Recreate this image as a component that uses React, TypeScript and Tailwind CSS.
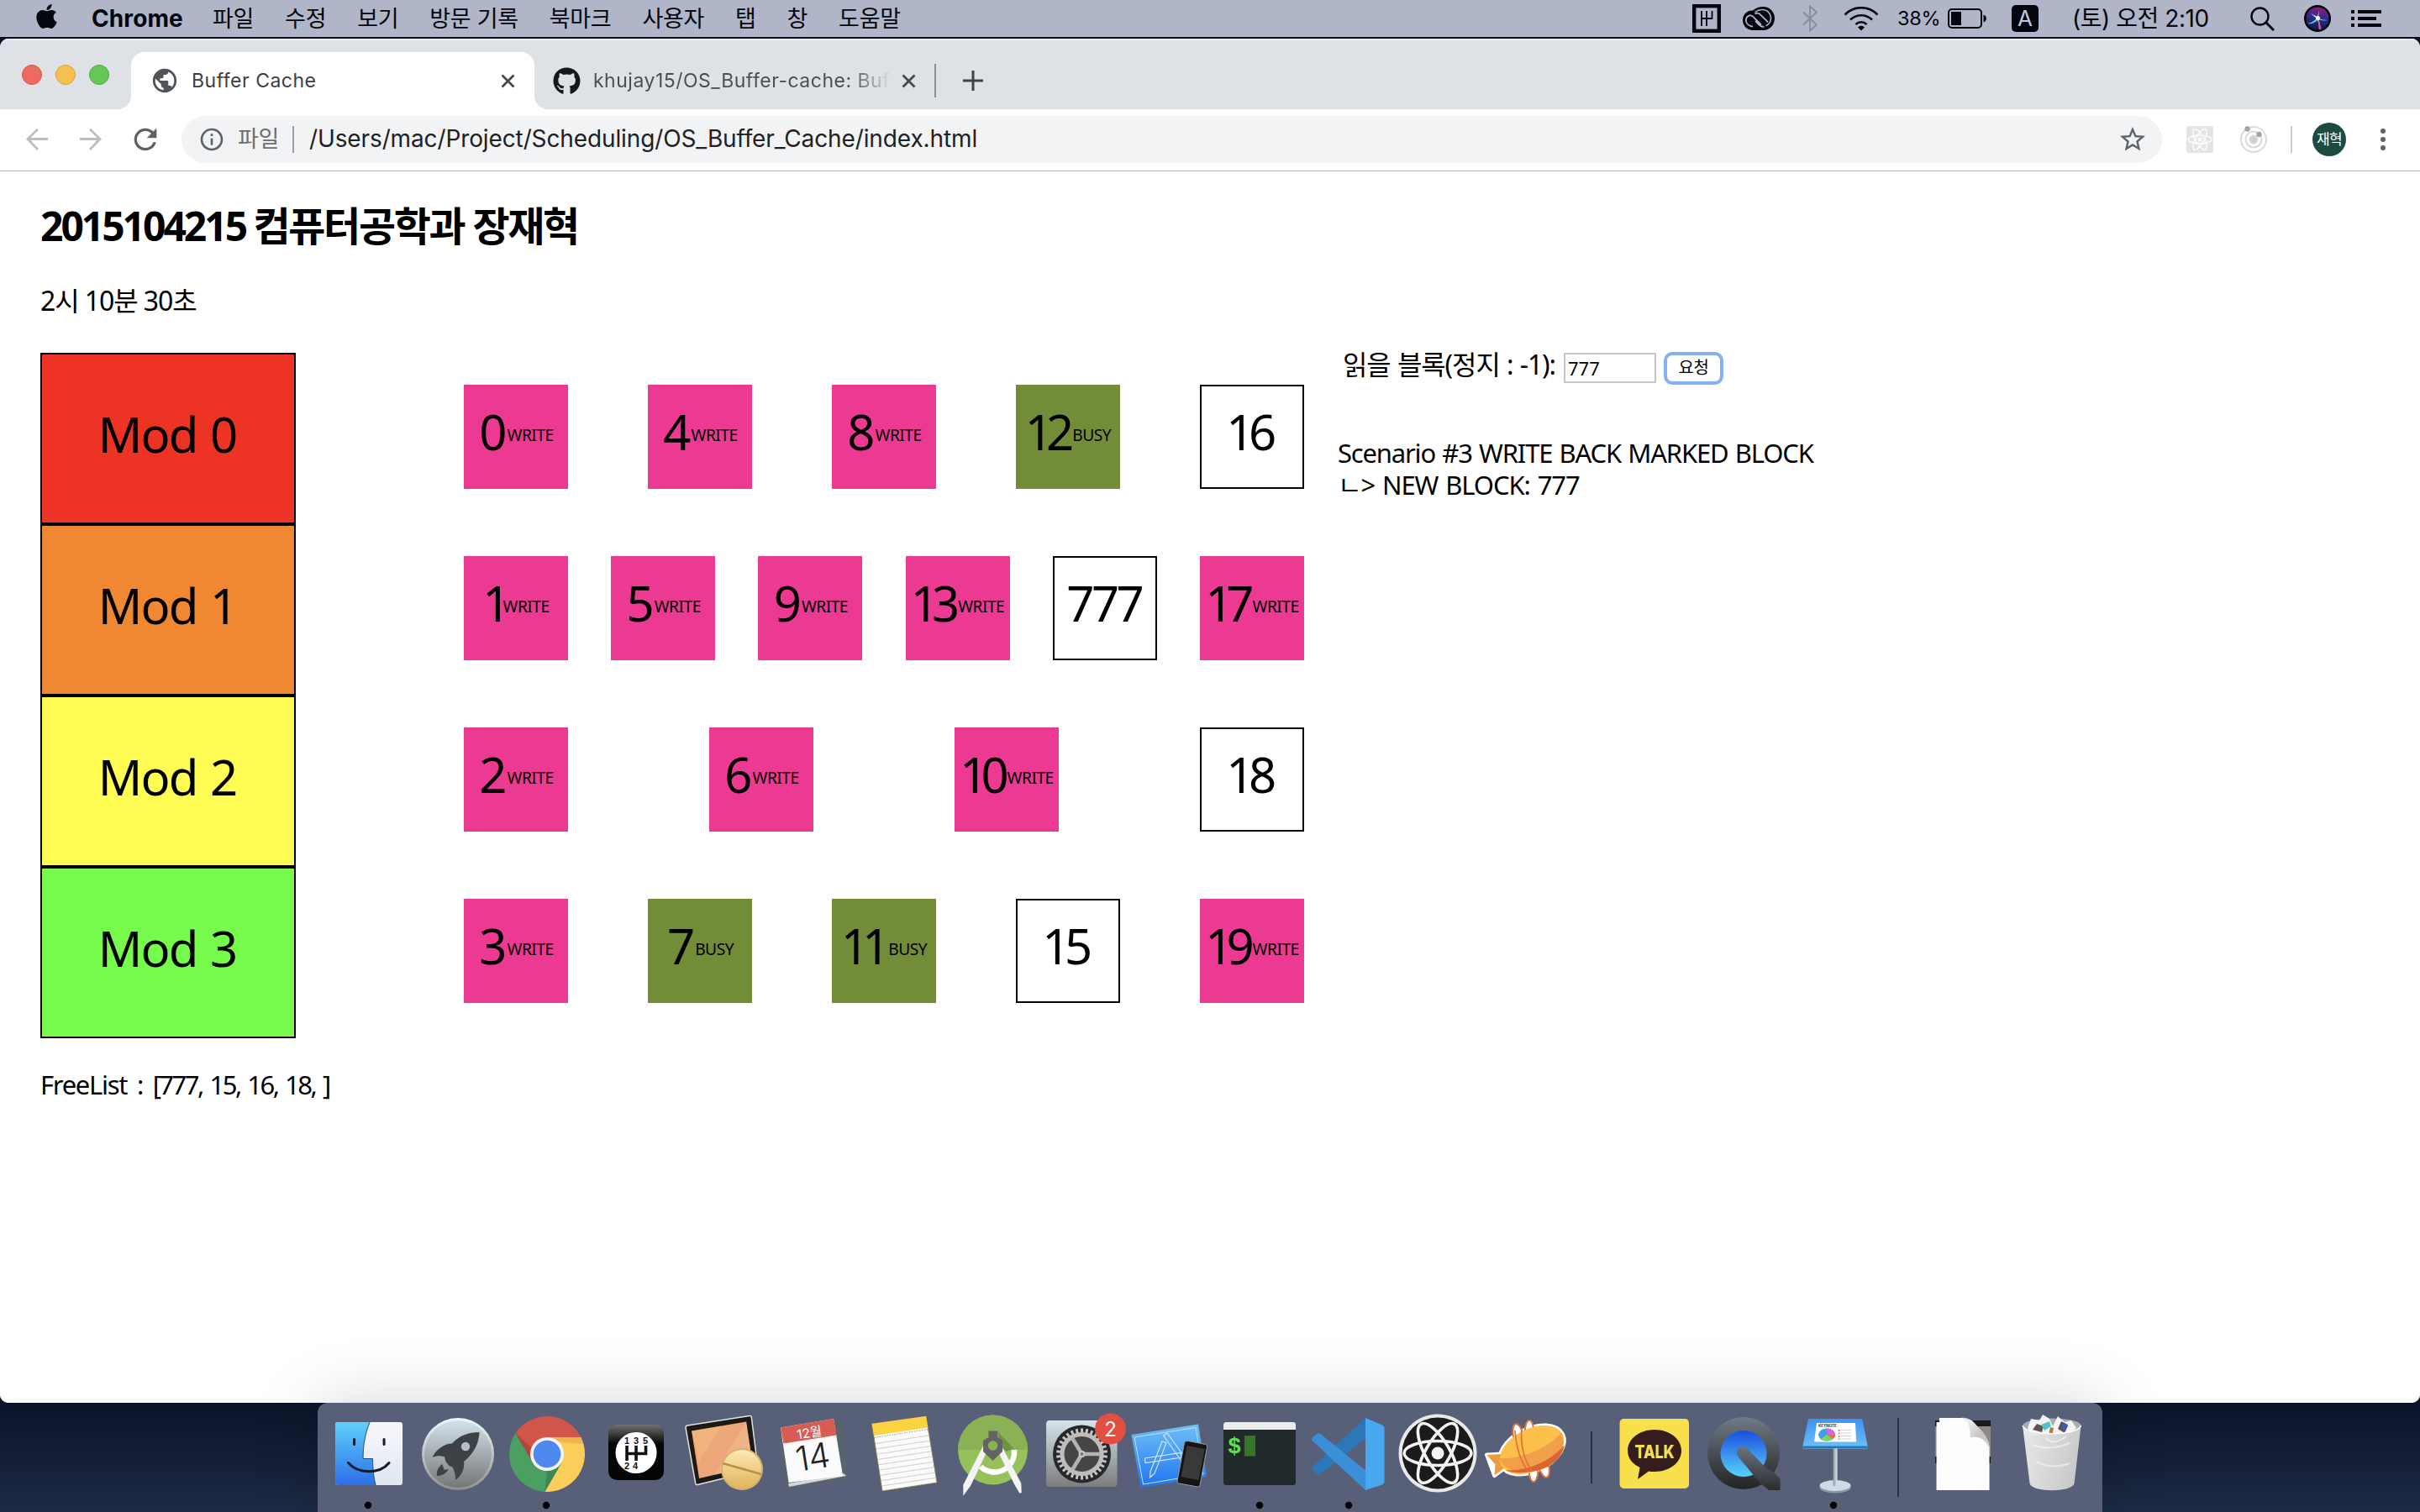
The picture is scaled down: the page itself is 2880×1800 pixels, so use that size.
import type { ReactNode } from "react";
import { FaApple, FaGithub } from "react-icons/fa";
import { MdInfoOutline, MdPublic, MdRefresh, MdStarBorder } from "react-icons/md";

const UI = "font-[Inter,'Noto_Sans_CJK_KR',sans-serif]";
const BODY = "font-['Noto_Sans','Noto_Sans_CJK_KR',sans-serif]";

/* ---------- menu bar ---------- */

const menus = ["파일", "수정", "보기", "방문 기록", "북마크", "사용자", "탭", "창", "도움말"];

function MenuBar() {
  return (
    <div className={`flex h-[44px] shrink-0 items-center bg-[#b0b6c8] text-[#03050f] ${UI}`}>
      <FaApple className="-mt-[5px] ml-[39px] size-[33px]" />
      <span className="ml-[37px] w-[144px] text-[28px] leading-[44px] font-bold tracking-[0.1px]">Chrome</span>
      <div className="flex gap-[37px]">
        {menus.map((m) => (
          <span key={m} className="pt-[2px] text-[27px] leading-[42px] tracking-[-0.3px] whitespace-nowrap">{m}</span>
        ))}
      </div>
      <div className="ml-auto flex items-center pr-[46px]">
        <svg className="h-[34px] w-[34px]" viewBox="0 0 34 34" fill="none" stroke="#03050f">
          <rect x="2.2" y="2.2" width="29.6" height="29.6" strokeWidth="4.4" />
          <path d="M11 8v18M17 8v18M23.500 8v9H11" strokeWidth="1.800" />
        </svg>
        <svg className="ml-[26px] h-[28px] w-[38px]" viewBox="0 0 38 28">
          <path d="M12 4.500C14.500 2 19 0 24.500 0 32 0 38 6 38 13.800S32.500 28 24.500 28H12C5.500 28 0 23 0 16S5.500 4 12 4.500Z" fill="#03050f" />
          <path d="M22 21.500L11.500 11.200C8 9 3.800 12 3.800 16.200S8 23.500 12 23.500M15 17l4.500 4.500c2 2 4 2.500 6 2.300M14.500 8.500c3-2 6 .2 7.500 1.800l8 8" stroke="#b0b6c8" strokeWidth="1.800" fill="none" />
          <path d="M14.500 6.500C20 2 28 2.500 31.500 7.500c4 6 1.500 13-4 15.300" stroke="#b0b6c8" strokeWidth="1.500" fill="none" />
        </svg>
        <svg className="ml-[33px] h-[32px] w-[18px]" viewBox="0 0 18 32" fill="none" stroke="#878c9c" strokeWidth="1.800">
          <path d="M1 8.500l16 15-8 7V1.500l8 7-16 15" />
        </svg>
        <svg className="ml-[31px] h-[29px] w-[42px]" viewBox="0 0 42 29" fill="none" stroke="#03050f" strokeWidth="2.700">
          <path d="M1.500 9.500C12.500-1.500 29.500-1.500 40.500 9.500M8 15.500c7.500-7 18.500-7 26 0M14.500 21c4-3.500 9-3.500 13 0" />
          <path d="M21 28.500l-4-4c2.500-2.200 5.500-2.200 8 0z" fill="#03050f" stroke="none" />
        </svg>
        <span className="ml-[22px] w-[60px] text-[23.500px] leading-[44px] tracking-[-0.3px]">38%</span>
        <svg className="h-[24px] w-[46px]" viewBox="0 0 46 24">
          <rect x="1" y="1" width="39" height="22" rx="4" fill="none" stroke="#03050f" strokeWidth="2" />
          <rect x="4" y="4" width="12" height="16" fill="#03050f" />
          <path d="M42.500 7.500c4.500 1.500 4.500 7.500 0 9z" fill="#03050f" />
        </svg>
        <span className="ml-[30px] flex size-[32px] items-center justify-center rounded-[5px] bg-[#03050f] text-[26px] leading-none text-[#c4c9d8]">A</span>
        <span className="ml-[40px] w-[212px] text-[28px] leading-[44px] tracking-[-0.45px] whitespace-nowrap">(토) 오전 2:10</span>
        <svg className="h-[29px] w-[29px]" viewBox="0 0 29 29" fill="none" stroke="#03050f" strokeWidth="2.400">
          <circle cx="11.500" cy="11.500" r="10" />
          <path d="M18.500 18.500L28 28" strokeWidth="3" />
        </svg>
        <svg className="ml-[35px] size-[32px]" viewBox="0 0 32 32">
          <defs>
            <linearGradient id="siri" x1="0.6" y1="0" x2="0.4" y2="1">
              <stop offset="0" stopColor="#8f1a78" />
              <stop offset="0.45" stopColor="#2c2f8f" />
              <stop offset="1" stopColor="#0a1a3c" />
            </linearGradient>
          </defs>
          <circle cx="16" cy="16" r="16" fill="#04030c" />
          <circle cx="16" cy="16" r="13.500" fill="url(#siri)" />
          <path d="M4 22c6-1 9-4 12-7 3 2 7 3 12 3-5 1-8 0-11-1-4 4-8 6-13 5z" fill="#5ce0ea" />
          <path d="M18 6l-1 9 3 13-5-12-7-6 8 4z" fill="#e9d3f5" />
          <path d="M17 17l3 12-2-1z" fill="#f04aa6" stroke="#f04aa6" />
          <circle cx="16.500" cy="15.500" r="2.500" fill="#fff" />
        </svg>
        <svg className="ml-[24px] h-[20px] w-[36px]" viewBox="0 0 36 20" fill="#03050f">
          <path d="M0 0h4v4H0zM8 0h28v4H8zM0 8h4v4H0zM8 8h22v4H8zM0 16h4v4H0zM8 16h28v4H8z" />
        </svg>
      </div>
    </div>
  );
}

/* ---------- browser chrome ---------- */

function CloseX() {
  return (
    <svg className="size-[17px]" viewBox="0 0 17 17" stroke="#45494d" strokeWidth="2.800" fill="none">
      <path d="M1.500 1.500l14 14M15.500 1.500l-14 14" />
    </svg>
  );
}

function TabStrip() {
  return (
    <div className={`flex h-[84px] items-end border-t-2 border-[#e9ebef] bg-[#dee1e6] ${UI}`}>
      <div className="mb-[29px] ml-[26px] flex w-[114px] gap-[16px]">
        <span className="size-[24px] rounded-full border border-[#dd5348] bg-[#ef6a5e]" />
        <span className="size-[24px] rounded-full border border-[#dca23a] bg-[#f6c04f]" />
        <span className="size-[24px] rounded-full border border-[#4bab3d] bg-[#63c856]" />
      </div>
      <svg className="size-[16px]" viewBox="0 0 16 16"><path d="M16 0v16H0C9 16 16 9 16 0z" fill="#fff" /></svg>
      <div className="flex h-[68px] w-[480px] items-center rounded-t-[16px] bg-white pl-[23px] text-[#3c4043]">
        <MdPublic className="size-[34px] text-[#505357]" />
        <span className="ml-[15px] w-[368px] text-[23px] leading-[68px] tracking-[0.5px]">Buffer Cache</span>
        <CloseX />
      </div>
      <svg className="size-[16px]" viewBox="0 0 16 16"><path d="M0 0v16h16C7 16 0 9 0 0z" fill="#fff" /></svg>
      <div className="flex h-[68px] items-center pl-[6px]">
        <FaGithub className="size-[33px] text-[#15181b]" />
        <span className="ml-[15px] w-[354px] overflow-hidden bg-linear-to-r from-[#4a4e52] from-86% to-[#dee1e6] bg-clip-text text-[23px] leading-[68px] tracking-[0.5px] whitespace-nowrap text-transparent">khujay15/OS_Buffer-cache: Buf</span>
        <div className="ml-[13px]"><CloseX /></div>
        <span className="ml-[22px] h-[40px] w-[2px] bg-[#8d9196]" />
        <svg className="ml-[31px] size-[26px]" viewBox="0 0 26 26" stroke="#3f4347" strokeWidth="3"><path d="M13 1v24M1 13h24" /></svg>
      </div>
    </div>
  );
}

function ReactOrbits({ stroke, w }: { stroke: string; w: number }) {
  return (
    <g fill="none" stroke={stroke} strokeWidth={w}>
      <ellipse rx="40" ry="14.500" />
      <ellipse rx="40" ry="14.500" transform="rotate(60)" />
      <ellipse rx="40" ry="14.500" transform="rotate(120)" />
      <circle r="7.500" fill={stroke} stroke="none" />
    </g>
  );
}

function Toolbar() {
  return (
    <div className={`flex h-[74px] items-center border-b border-[#b3b4b6] bg-white pb-[1px] ${UI}`}>
      <svg className="ml-[31px] h-[26px] w-[26px]" viewBox="0 0 26 26" stroke="#bcbec1" strokeWidth="2.800" fill="none"><path d="M26 12.500H1.800M14 .8L2 12.500 14 25" /></svg>
      <svg className="ml-[38px] h-[26px] w-[26px]" viewBox="0 0 26 26" stroke="#bcbec1" strokeWidth="2.800" fill="none"><path d="M0 12.500h24.200M12 .8l12 11.700L12 25" /></svg>
      <MdRefresh className="ml-[32px] size-[40px] text-[#5f6368]" />
      <div className="ml-[23px] flex h-[56px] w-[2357px] items-center rounded-full bg-[#f1f3f4] pl-[20px]">
        <MdInfoOutline className="size-[32px] text-[#5f6368]" />
        <span className="ml-[15px] w-[65px] text-[27px] leading-[56px] tracking-[-0.4px] whitespace-nowrap text-[#6b6f74]">파일</span>
        <span className="h-[32px] w-[2px] bg-[#9aa0a6]" />
        <span className="ml-[18px] pb-[1px] text-[28px] leading-[55px] tracking-[-0.12px] whitespace-nowrap text-[#202124]">/Users/mac/Project/Scheduling/OS_Buffer_Cache/index.html</span>
        <MdStarBorder className="mr-[17px] ml-auto size-[36px] text-[#5f6368]" />
      </div>
      <svg className="ml-[29px] size-[32px] rounded-[3px] bg-[#e4e4e4]" viewBox="-46 -46 92 92"><ReactOrbits stroke="#fbfbfb" w={4.500} /></svg>
      <svg className="ml-[32px] size-[32px]" viewBox="0 0 32 32" fill="none" stroke="#dadada" strokeWidth="2">
        <circle cx="16" cy="16" r="15" />
        <circle cx="16" cy="16" r="9.500" />
        <circle cx="16" cy="16" r="4.500" fill="#cfcfcf" />
        <circle cx="8.500" cy="3.500" r="3.200" fill="#a2a2a2" stroke="none" />
        <circle cx="22.500" cy="10" r="3.200" fill="#a2a2a2" stroke="none" />
      </svg>
      <span className="ml-[28px] h-[32px] w-[2px] bg-[#cccdd0]" />
      <span className="ml-[24px] flex size-[40px] items-center justify-center rounded-full bg-[#1e4b40] text-[17px] leading-none tracking-[-0.6px] whitespace-nowrap text-white">재혁</span>
      <svg className="ml-[41px] h-[26px] w-[6px]" viewBox="0 0 6 26" fill="#5f6368"><circle cx="3" cy="3" r="3" /><circle cx="3" cy="13" r="3" /><circle cx="3" cy="23" r="3" /></svg>
    </div>
  );
}

/* ---------- page ---------- */

type Kind = "WRITE" | "BUSY" | "";
const rows: { color: string; blocks: [string, Kind][] }[] = [
  { color: "bg-[#ed3324]", blocks: [["0", "WRITE"], ["4", "WRITE"], ["8", "WRITE"], ["12", "BUSY"], ["16", ""]] },
  { color: "bg-[#f08733]", blocks: [["1", "WRITE"], ["5", "WRITE"], ["9", "WRITE"], ["13", "WRITE"], ["777", ""], ["17", "WRITE"]] },
  { color: "bg-[#fffd54]", blocks: [["2", "WRITE"], ["6", "WRITE"], ["10", "WRITE"], ["18", ""]] },
  { color: "bg-[#76fb4c]", blocks: [["3", "WRITE"], ["7", "BUSY"], ["11", "BUSY"], ["15", ""], ["19", "WRITE"]] },
];

const kindStyle: Record<Kind, string> = {
  WRITE: "bg-[#ec3a92]",
  BUSY: "bg-[#728c37]",
  "": "border-2 border-black bg-white",
};

function numberSpacing(n: string, kind: Kind) {
  if (n === "1") return "tracking-[-9px]";
  if (n.length === 1) return "pl-[1px]";
  if (n.length === 3) return "tracking-[-3.500px] pr-[2px]";
  return kind ? "tracking-[-8px] pr-[6px]" : "tracking-[-6.500px] pr-[8px]";
}

function Block({ n, kind }: { n: string; kind: Kind }) {
  return (
    <div className={`flex size-[124px] items-center justify-center ${kindStyle[kind]}`}>
      <span className={`pb-[12px] text-[58px] leading-none ${numberSpacing(n, kind)}`}>{n}</span>
      {kind && <span className="pb-[5px] text-[19.200px] leading-none tracking-[-0.5px]">{kind}</span>}
    </div>
  );
}

function Page() {
  return (
    <div className={`flex-1 bg-white pl-[48px] text-black ${BODY}`}>
      <h1 className="mt-[33px] text-[48px] leading-[64px] font-bold tracking-[-3.050px]">
        2015104215 <span className="tracking-[-2.350px]">컴퓨터공학과 장재혁</span>
      </h1>
      <p className="mt-[37px] text-[32px] leading-[40px] tracking-[-1.100px]">2시 10분 30초</p>
      <div className="mt-[42px] flex">
        <div className="w-[304px]">
          {rows.map((r, i) => (
            <div key={i} className={`flex h-[204px] items-center justify-center border-2 border-black pr-[2px] pb-[11px] text-[58px] leading-none tracking-[-1.800px] [word-spacing:2px] ${r.color}`}>Mod {i}</div>
          ))}
        </div>
        <div className="ml-[200px] w-[1000px]">
          {rows.map((r, i) => (
            <div key={i} className="flex h-[204px] justify-between pt-[38px]">
              {r.blocks.map(([n, kind]) => <Block key={n} n={n} kind={kind} />)}
            </div>
          ))}
        </div>
        <div className="ml-[40px]">
          <div className="-mt-[2px] flex h-[40px] items-center pl-[6px]">
            <span className="w-[263px] pb-[9px] text-[32px] leading-[40px] tracking-[-1.100px] whitespace-nowrap [word-spacing:1px]">읽을 블록(정지 : -1):</span>
            <input className="h-[36px] w-[110px] border-2 border-[#c6c6c6] px-[3px] text-[22px] leading-[30px] outline-none" defaultValue="777" />
            <button className="ml-[9px] h-[39px] w-[71px] rounded-[10px] border-[4px] border-[#85b0f3] bg-white pb-[1px] text-[20px] leading-[30px] tracking-[-0.3px]">요청</button>
          </div>
          <p className="mt-[62px] text-[31px] leading-[38px] tracking-[-1.190px] whitespace-nowrap [word-spacing:1.500px]">Scenario #3 WRITE BACK MARKED BLOCK</p>
          <p className="text-[31px] leading-[38px] tracking-[-1.100px] whitespace-nowrap [word-spacing:2px]">ㄴ&gt; NEW BLOCK: 777</p>
        </div>
      </div>
      <p className="mt-[35px] text-[31px] leading-[40px] tracking-[-1.300px] [word-spacing:5px]">
        FreeList : <span className="tracking-[-2.500px] [word-spacing:3px]">[777, 15, 16, 18, ]</span>
      </p>
    </div>
  );
}

/* ---------- dock ---------- */

function Slot({ children, running }: { children: ReactNode; running?: boolean }) {
  return (
    <svg className="h-[130px] w-[106.100px] shrink-0" viewBox="0 0 106 130">
      {children}
      {running && <circle cx="52" cy="122" r="4.200" fill="#000" />}
    </svg>
  );
}

function Grad({ id, a, b, x2 = "0", y2 = "1" }: { id: string; a: string; b: string; x2?: string; y2?: string }) {
  return (
    <linearGradient id={id} x1="0" y1="0" x2={x2} y2={y2}>
      <stop offset="0" stopColor={a} />
      <stop offset="1" stopColor={b} />
    </linearGradient>
  );
}

const noteLines = Array.from({ length: 9 }, (_, i) => i);
const teeth = Array.from({ length: 30 }, (_, i) => i * 12);

function Dock() {
  return (
    <div className="relative mx-auto flex h-[130px] w-[2124px] rounded-t-[12px] bg-[#586079] pl-[8px] shadow-[0_0_80px_rgba(0,0,0,0.17)]">
      {/* Finder */}
      <Slot running>
        <defs><Grad id="fb" a="#5fd0fa" b="#2c6fe9" /><Grad id="fw" a="#f7f7fa" b="#dfe7f1" /></defs>
        <rect x="13" y="23" width="80" height="75" rx="3" fill="url(#fw)" />
        <path d="M16 23H54C48 38 46 52 46 66.500H57.500C57.500 80 59 90 61 98H16a3 3 0 01-3-3V26a3 3 0 013-3z" fill="url(#fb)" />
        <path d="M54 23C48 38 46 52 46 66.500H57.500C57.500 80 59 90 61 98" fill="none" stroke="#1b4f8f" strokeWidth="1" />
        <path d="M35.500 43.500v6M71 43.500v6M28.500 71.500C40 85 66 85 77 71.500" stroke="#101b2c" strokeWidth="3" strokeLinecap="round" fill="none" />
      </Slot>
      {/* Launchpad */}
      <Slot>
        <defs><Grad id="lp" a="#d2e2ea" b="#767676" /><Grad id="lr" a="#eefaff" b="#8f8f8f" /></defs>
        <circle cx="53" cy="61" r="43" fill="url(#lr)" />
        <circle cx="53" cy="61" r="40" fill="url(#lp)" />
        <path d="M78.500 35C66 35 54 39 46 48.500 38 48 27 55 22.500 65c5-2 10-2.500 14.500-.5l1.500 5.500 4 5 4 1.500c2 5 4 9 3.500 15.500 8-6 11-14 10-22C72 60 78 48 78.500 35z" fill="#3c4246" />
        <circle cx="62" cy="52" r="5.200" fill="#b5c0c5" />
        <path d="M34 73c-5 4-7 9-6 14 6 0 11-3 14-8-3 1-5 1-6 0 0-2-1-4-2-6z" fill="#3c4246" />
      </Slot>
      {/* Chrome */}
      <Slot running>
        <g transform="translate(53 61)">
          <path d="M-37.500-24.900A45 45 0 0140.300-20H0L-17.300 10z" fill="#d0554a" />
          <path d="M40.300-20A45 45 0 01-2.800 44.900L17.300 10 0-20z" fill="#fbce5a" />
          <path d="M-2.800 44.900A45 45 0 01-37.500-24.900L-17.300 10 17.300 10z" fill="#4a9f61" />
          <path d="M0-20h40.300l2 8L18-14z" fill="#d99a3c" opacity=".45" />
          <path d="M-37.500-24.900L-17.300 10-19-8z" fill="#8c2a24" opacity=".4" />
          <path d="M-2.800 44.900L17.300 10 0 19z" fill="#1d6b3b" opacity=".4" />
          <circle r="20" fill="#f4f4f4" />
          <circle r="16.300" fill="#5089ee" />
        </g>
      </Slot>
      {/* Manual gearbox */}
      <Slot>
        <defs><Grad id="gb" a="#707070" b="#050505" y2="0.35" /></defs>
        <rect x="20" y="26" width="66" height="66" rx="10" fill="url(#gb)" />
        <circle cx="53" cy="59.500" r="24.500" fill="#fff" />
        <path d="M42 51v18M53 51v18M64.500 51v9.500H42" fill="none" stroke="#111" strokeWidth="3.600" />
        <g className="font-['Liberation_Sans',sans-serif] text-[11px] font-bold" fill="#111" textAnchor="middle">
          <text x="42" y="49">1</text><text x="53" y="49">3</text><text x="64" y="49">5</text>
          <text x="42" y="79">2</text><text x="52" y="79">4</text>
        </g>
      </Slot>
      {/* Display with pill */}
      <Slot>
        <defs><Grad id="mo" a="#f0a868" b="#eba58a" x2="1" y2="0.6" /><Grad id="pi" a="#fbe9b4" b="#e0b45c" /></defs>
        <path d="M8 27L82 15.500q2-.3 2.300 2L92 78q.3 2-2 2.500L20 97.500q-2 .5-2.300-1.500L6 30q-.3-2.500 2-3z" fill="#1d1a16" stroke="#e4e2dd" strokeWidth="1.500" />
        <path d="M13 33.500L78 22.500 86 75 22 90z" fill="url(#mo)" />
        <path d="M13 33.500L48 27.500 22 70zM78 22.500L86 75 40 86z" fill="#f6c692" opacity=".4" />
        <circle cx="73" cy="79" r="25" fill="#d9b068" />
        <circle cx="73" cy="79" r="23" fill="url(#pi)" />
        <path d="M50 72l46 13" stroke="#bb8f45" strokeWidth="2.500" />
      </Slot>
      {/* Calendar */}
      <Slot>
        <path d="M10 33L88 20.500 92.500 90 20 103z" fill="#56646d" />
        <path d="M22 96L88 84 91 87 23 100z" fill="#d6d6d6" />
        <path d="M13 29.500L76 19 87 87 22.500 95z" fill="#fbfbfb" />
        <path d="M13 29.500L76 19 79.500 38.500 16.500 48.500z" fill="#d95c52" />
        <g transform="rotate(-9 50 60)" className={UI} textAnchor="middle">
          <text x="51" y="41" fill="#fff" className="text-[15.500px]">12월</text>
          <text x="50" y="79" fill="#222" className="text-[41px] font-light" letterSpacing="-1">14</text>
        </g>
      </Slot>
      {/* Notes */}
      <Slot>
        <path d="M14.500 25L79 16 92 95 27 105z" fill="#fbfbf9" stroke="#8a7a3d" strokeWidth=".8" />
        <path d="M14.500 25L79 16 81.200 29.500 17 39z" fill="#fbd23f" />
        <path d="M17.500 41.500L81.500 31.500" stroke="#999" strokeWidth="1" strokeDasharray="1.500 1.500" />
        {noteLines.map((i) => (
          <path key={i} d={`M${19 + i} ${48.500 + i * 6.300}l63.500 -9.600`} stroke="#cfcfcf" strokeWidth="1" />
        ))}
      </Slot>
      {/* Android Studio */}
      <Slot>
        <circle cx="52.500" cy="56" r="41.500" fill="#97c25b" />
        <path d="M11 56a41.500 41.500 0 0183 0z" fill="#8ab154" />
        <path d="M58 34l19 20-8 4-8-6z" fill="#6f9141" />
        <path d="M78 56C79 74 64 85 50 82 45 81 41 79 38 76" fill="none" stroke="#fff" strokeWidth="6.500" />
        <path d="M45 56L25 98l-6.500 9v-9L42 52zM60 58l20 40 5.500 9-.5-11L63 54z" fill="#f4f4f4" stroke="#f4f4f4" strokeWidth="2.500" />
        <path d="M47.500 33.500H58v7.500l6 4V58L52.500 69 41 58V45l6.500-4z" fill="#646464" />
        <circle cx="52.500" cy="51" r="5.800" fill="#8ab154" />
      </Slot>
      {/* System Preferences */}
      <Slot>
        <defs><Grad id="sp" a="#d6e4ea" b="#7c7c7c" /></defs>
        <rect x="10" y="21" width="84.500" height="79" rx="4" fill="url(#sp)" />
        <circle cx="52.500" cy="61" r="34.500" fill="#26292b" />
        <g transform="translate(52.500 61)">
          {teeth.map((t) => <rect key={t} x="-1.500" y="-30.500" width="3" height="6" fill="#c4c4c4" transform={`rotate(${t})`} />)}
          <circle r="23.500" fill="#454545" stroke="#bfbdba" strokeWidth="5" />
          <path d="M0 0h22M0 0L-11.500-19M0 0l-11.500 19" stroke="#b5b2af" strokeWidth="4.500" />
          <circle r="4" fill="#c9c7c4" /><circle r="2" fill="#777" />
        </g>
        <circle cx="86.500" cy="31" r="18.500" fill="#e24e40" />
        <text x="86.500" y="39.500" textAnchor="middle" fill="#fff" className={`text-[24px] ${UI}`}>2</text>
      </Slot>
      {/* Simulator */}
      <Slot>
        <defs><Grad id="xc" a="#6fc0f8" b="#1f74f0" /></defs>
        <path d="M5.400 38L85 25.500 95 88 16.500 101z" fill="url(#xc)" />
        <path d="M9 41L82 29.500 91 85 19.500 97z" fill="none" stroke="#bfe2fd" strokeWidth="1" />
        <g fill="none" stroke="#cfe8fd" strokeWidth="1.200">
          <path d="M42 46l5 1.500L33 84l-5.500 5 .5-7zM43.500 39l4.500-3L74 72l-5 3zM21.500 66L64 59.500l1 5.500-43 6.500z" />
        </g>
        <path d="M73 45.500l20.500 4q2.500.5 2 3L87 98q-.5 2.500-3 2L62 96q-2.500-.5-2-3l8.500-45.500q.5-2.500 4.500-2z" fill="#141414" stroke="#9a9a9a" strokeWidth="1" />
        <path d="M71.500 51l21 4-7 37-21-4z" fill="#38393b" />
      </Slot>
      {/* Terminal */}
      <Slot running>
        <rect x="9" y="23" width="86" height="75" rx="3" fill="#22292b" />
        <path d="M12 23h80a3 3 0 013 3v6H9v-6a3 3 0 013-3z" fill="#ececec" />
        <text x="14" y="60" fill="#5fe04a" className="font-['Liberation_Mono',monospace] text-[27px] font-bold">$</text>
        <rect x="34" y="39" width="13" height="24.500" fill="#35752d" />
      </Slot>
      {/* VS Code */}
      <Slot running>
        <path d="M8.500 76.500q-1 2 .5 3.500l5.500 5q2 1.500 4 0L72 42.500V18z" fill="#2c77b8" />
        <path d="M8.500 45q-1-2 .5-3.500l5.500-4.500q2-1.500 4 0L72 80.500V104z" fill="#3a8fd6" />
        <path d="M72 18l20 8.500q2.500 1 2.500 3.500v64q0 2.500-2.500 3.500L72 104z" fill="#4aa8f0" />
      </Slot>
      {/* React Native Debugger */}
      <Slot>
        <circle cx="52" cy="60" r="46.500" fill="#e9e9e9" />
        <circle cx="52" cy="60" r="42.500" fill="#1b1b1b" />
        <g transform="translate(52 60)"><ReactOrbits stroke="#f4f4f4" w={3.600} /></g>
      </Slot>
      {/* Zeplin */}
      <Slot>
        <g fill="#fff" stroke="#fff" strokeWidth="5" strokeLinejoin="round">
          <path d="M4.500 62l20-1 7 12-18 13.500z" />
          <ellipse cx="58" cy="56" rx="41" ry="25" transform="rotate(-27 58 56)" />
        </g>
        <g fill="#fff" stroke="#e2733a" strokeWidth="2">
          <ellipse cx="42" cy="40" rx="6" ry="15" transform="rotate(-12 42 40)" />
          <ellipse cx="55" cy="36" rx="5.500" ry="15" />
          <ellipse cx="60" cy="79" rx="5.500" ry="15" />
          <ellipse cx="72" cy="74" rx="6" ry="15" transform="rotate(-14 72 74)" />
        </g>
        <path d="M4.500 62l20-1 7 12-18 13.500 1-13z" fill="#f09a3e" />
        <ellipse cx="58" cy="56" rx="41" ry="25" transform="rotate(-27 58 56)" fill="#fdc04a" />
        <path d="M19 66C45 68 78 54 93 35 102 58 85 76 62 81 44 85 26 82 19 66z" fill="#f0a04a" />
        <path d="M27 80C52 82 80 70 97 50 94 66 80 78 62 81 48 84 34 84 27 80z" fill="#dd6430" />
        <path d="M38 33c1 18 6 36 16 49M46 30c-2 17 2 38 12 51" stroke="#e2733a" strokeWidth="1.800" fill="none" />
      </Slot>
      <div className="flex w-[46px] shrink-0 justify-center"><span className="mt-[34px] h-[62px] w-[2px] bg-[#263050]" /></div>
      {/* KakaoTalk */}
      <Slot>
        <rect x="10.500" y="19" width="82.500" height="83" rx="5" fill="#f8e04c" />
        <path d="M52 32c18 0 32 11 32 25S70 82 52 82q-4 0-7-.5L32 91l2.500-14C26 73 20 66 20 57c0-14 14-25 32-25z" fill="#371c1e" />
        <text x="52" y="66" textAnchor="middle" fill="#f8e04c" textLength="47" lengthAdjust="spacingAndGlyphs" className="font-[Inter,sans-serif] text-[22px] font-extrabold">TALK</text>
      </Slot>
      {/* QuickTime */}
      <Slot>
        <defs><Grad id="qr" a="#707a85" b="#222324" /><Grad id="qb" a="#1c4ee0" b="#58d2fb" /><Grad id="qt" a="#6a7480" b="#2b2c2e" /></defs>
        <circle cx="52" cy="60" r="43" fill="url(#qr)" />
        <circle cx="52" cy="60.500" r="27.500" fill="url(#qb)" />
        <path d="M45.500 64a7 7 0 0111-9.500L79 78l8 4 8.500 8.500V104H82L72 96l-8-9.500z" fill="url(#qt)" />
      </Slot>
      {/* Keynote */}
      <Slot running>
        <defs><Grad id="kn" a="#3a93f3" b="#6ec2fb" /><Grad id="kp" a="#8d98a3" b="#dfe6ec" x2="1" y2="0" /></defs>
        <ellipse cx="54" cy="101" rx="18.500" ry="6.500" fill="#8899aa" />
        <ellipse cx="54" cy="98.500" rx="18.500" ry="6.500" fill="#cfdae6" />
        <rect x="51.500" y="54" width="5" height="45" fill="url(#kp)" />
        <path d="M22 19H86L92.500 51v3.500H15.500V51z" fill="url(#kn)" />
        <path d="M15.500 51.500h77v2.500h-77z" fill="#1b7bbf" />
        <path d="M32 24H78L79 46.500H29z" fill="#fff" />
        <text x="34" y="28.800" fill="#333" className="font-[Inter,sans-serif] text-[4.500px] font-bold">KEYNOTE</text>
        <ellipse cx="44" cy="38" rx="10" ry="7.500" fill="#3f9fe8" />
        <path d="M44 38v-7.500a10 7.500 0 0110 7.500z" fill="#c86de0" />
        <path d="M44 38h10q0 3-4 5z" fill="#f0684a" />
        <path d="M44 38l7 5q-6 4.500-15 .5z" fill="#7fd45a" />
        <path d="M60 32.500h13M60 36h13M60 39.500h13M60 43h13" stroke="#d2d4d8" strokeWidth="1.200" />
        <path d="M58.500 32v12" stroke="#e8607a" strokeWidth="1.500" strokeDasharray="2 1.500" />
      </Slot>
      <div className="flex w-[47px] shrink-0 justify-center"><span className="mt-[18px] h-[94px] w-[2px] bg-[#263050]" /></div>
      {/* Documents stack */}
      <Slot>
        <defs><Grad id="cu" a="#ffffff" b="#c6c6c6" x2="0.6" y2="0.6" /></defs>
        <path d="M20 21h66v51H20z" fill="#191919" />
        <path d="M20 28h66v36H20z" fill="#8f8a86" />
        <path d="M25 18H52C66 18 70 28 74 36 82 41 84.500 47 84.500 55V104H21.500V23H25z" fill="#fdfdfd" />
        <path d="M52 18C62 20 62 32 62 41 72 39 80 43 84.500 54 83 40 74 32 68 26 63 21 58 18 52 18z" fill="url(#cu)" stroke="#d2d2d2" strokeWidth=".6" />
      </Slot>
      {/* Trash */}
      <Slot>
        <defs><Grad id="tr" a="#eeeeee" b="#cfcfcf" x2="1" y2="0.3" /></defs>
        <ellipse cx="53" cy="27" rx="34.500" ry="8.500" fill="#a9abb0" />
        <path d="M24 30l4-11 10 2 4-7 8 5 4 9 6-12 8 7 8-2 6 9-8 8-46 1z" fill="#f3f3f3" />
        <path d="M30 32l5-7 8 3-2 7zM60 31l4-9 8 5-4 9z" fill="#60524c" />
        <path d="M40 26l10-4 2 6-8 5z" fill="#4cc6c9" />
        <path d="M66 23l6 3-3 7-5-2z" fill="#3f5fa8" />
        <path d="M51 29l4 1-2 9-4-1z" fill="#c4733c" />
        <path d="M18 27C22 40 84 40 87.500 27L79.500 96C77 107 29 107 26.500 96z" fill="url(#tr)" opacity=".96" />
        <path d="M18 27C22 40 84 40 87.500 27" fill="none" stroke="#fafafa" strokeWidth="1.500" />
        <path d="M30 50q20 8 44-2M34 70q18 10 40 2M46 42q8 10 24-2" stroke="#fff" strokeWidth="2" opacity=".5" fill="none" />
      </Slot>
    </div>
  );
}

export default function App() {
  return (
    <div className="flex h-[1800px] w-[2880px] flex-col overflow-hidden bg-linear-to-b from-[#060b1e] from-90% to-[#1d2b45]">
      <MenuBar />
      <div className="mt-[2px] flex h-[1624px] shrink-0 flex-col overflow-hidden rounded-[10px] bg-white">
        <TabStrip />
        <Toolbar />
        <Page />
      </div>
      <Dock />
    </div>
  );
}
